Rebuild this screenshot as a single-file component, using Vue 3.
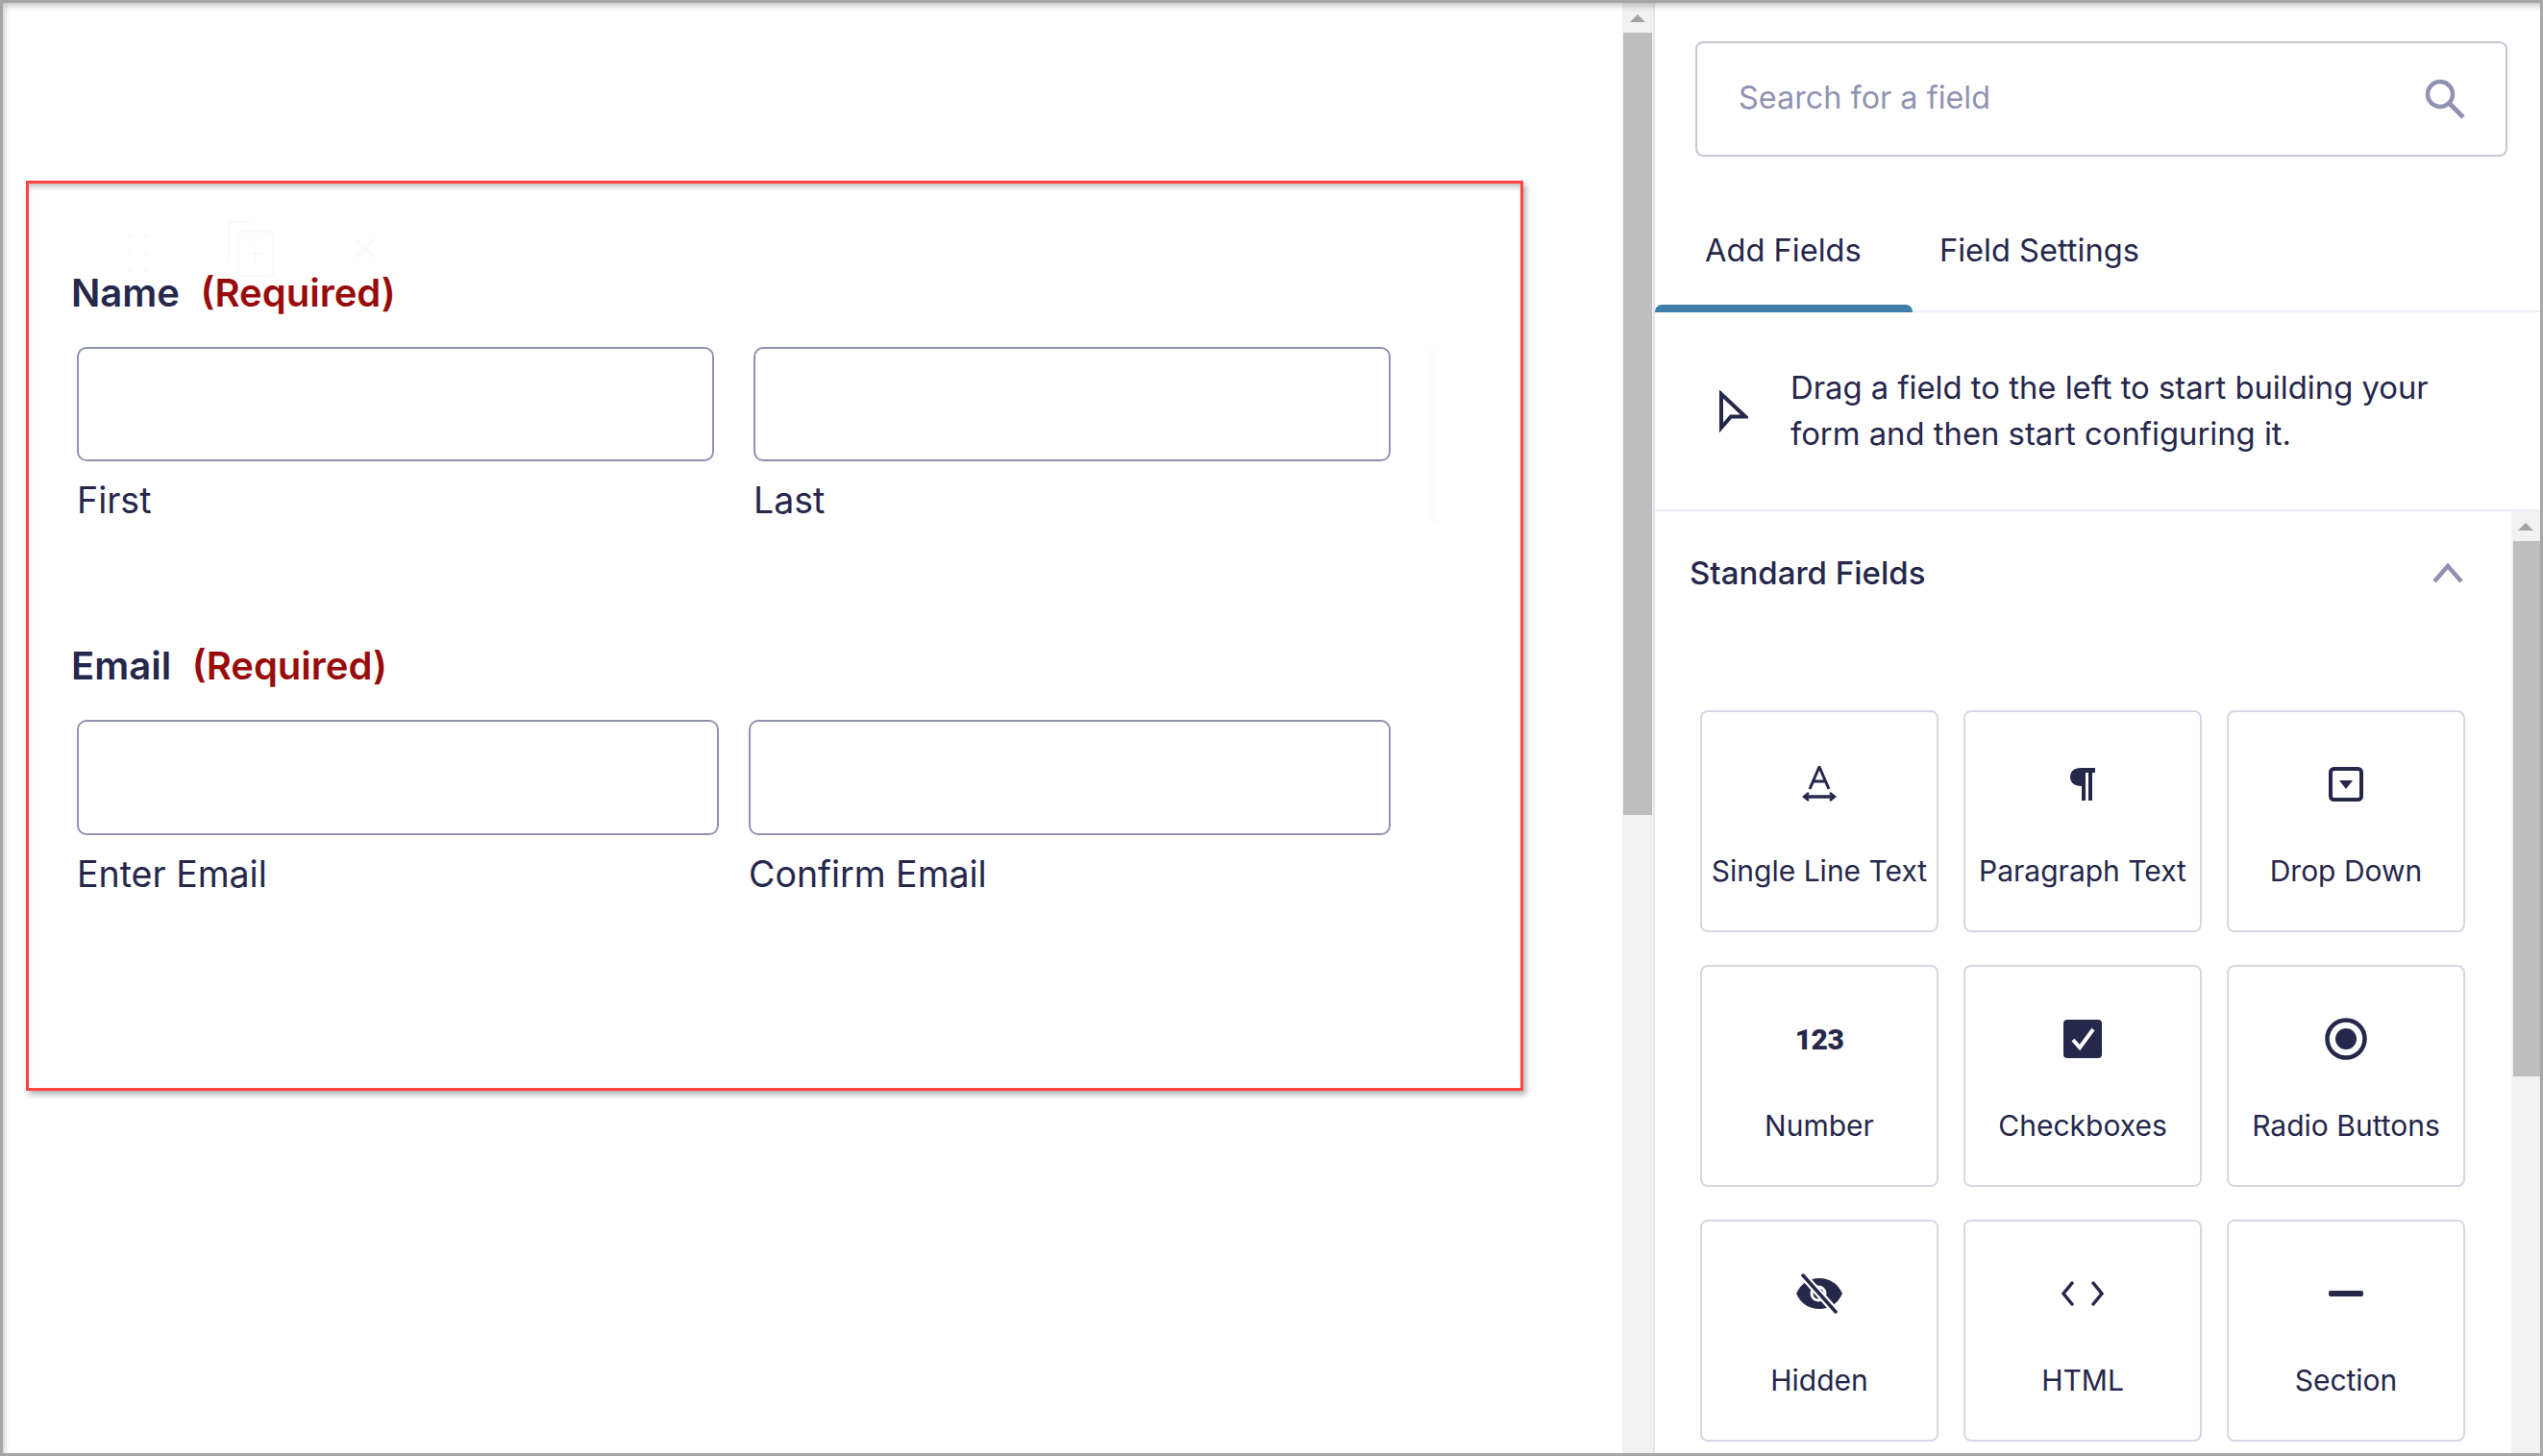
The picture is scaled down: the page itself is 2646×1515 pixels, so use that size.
<script setup>
const fieldCards = [
  { key: 'text', label: 'Single Line Text' },
  { key: 'para', label: 'Paragraph Text' },
  { key: 'drop', label: 'Drop Down' },
  { key: 'num', label: 'Number' },
  { key: 'check', label: 'Checkboxes' },
  { key: 'radio', label: 'Radio Buttons' },
  { key: 'hidden', label: 'Hidden' },
  { key: 'html', label: 'HTML' },
  { key: 'section', label: 'Section' },
]
</script>

<template>
  <div class="frame">
    <main class="canvas">
      <section class="form-box">
        <div class="ghost-tools" aria-hidden="true">
          <svg width="170" height="60" viewBox="0 0 170 60">
            <g fill="#fbfbfc">
              <circle cx="3" cy="16" r="3" /><circle cx="20" cy="16" r="3" />
              <circle cx="3" cy="34" r="3" /><circle cx="20" cy="34" r="3" />
              <circle cx="3" cy="52" r="3" /><circle cx="20" cy="52" r="3" />
            </g>
            <g fill="none" stroke="#fafafb" stroke-width="2">
              <path d="M106 2H130M106 2V44" />
              <rect x="116" y="12" width="36" height="46" rx="3" />
              <path d="M134 26V44M125 35H143" />
            </g>
          </svg>
          <span class="ghost-x">×</span>
        </div>
        <div class="ghost-bar" aria-hidden="true"></div>

        <h2 class="field-title">Name <em>(Required)</em></h2>
        <div class="input-row name-row">
          <div><div class="input"></div><div class="sub first-sub">First</div></div>
          <div><div class="input"></div><div class="sub first-sub">Last</div></div>
        </div>

        <h2 class="field-title email-title">Email <em>(Required)</em></h2>
        <div class="input-row email-row">
          <div><div class="input tall"></div><div class="sub">Enter Email</div></div>
          <div><div class="input tall"></div><div class="sub">Confirm Email</div></div>
        </div>
      </section>
    </main>

    <div class="scroll main-scroll">
      <div class="scroll-btn"><i></i></div>
      <div class="thumb main-thumb"></div>
    </div>

    <aside class="panel">
      <div class="search-wrap">
        <div class="search">
          <span>Search for a field</span>
          <svg width="44" height="44" viewBox="0 0 44 44" fill="none" stroke="#9092b2" stroke-width="4.5">
            <circle cx="17" cy="17" r="13" />
            <path d="M26.5 26.5L41 41" stroke-width="5" />
          </svg>
        </div>
      </div>

      <nav class="tabs">
        <div class="tab active">Add Fields</div>
        <div class="tab">Field Settings</div>
      </nav>

      <div class="hint">
        <svg class="cursor" width="30" height="44" viewBox="0 0 30 44" fill="none" stroke="#25274b" stroke-width="4">
          <path d="M2 4V39L12 27.5H27Z" />
        </svg>
        <p>Drag a field to the left to start building your form and then start configuring it.</p>
      </div>

      <div class="lower">
        <div class="fields">
          <div class="fields-head">
            <span>Standard Fields</span>
            <svg width="32" height="24" viewBox="0 0 32 24" fill="none" stroke="#9092b2" stroke-width="4.5">
              <path d="M2 21L16 5L30 21" />
            </svg>
          </div>
          <div class="grid">
            <div v-for="card in fieldCards" :key="card.key" class="card">
              <div class="card-icon">
                <svg v-if="card.key === 'text'" width="36" height="38" viewBox="0 0 36 38" fill="none" stroke="#25274b" stroke-width="3">
                  <path d="M8 24L18 1L28 24M11.500 16H24.500" />
                  <path d="M3 32H33" stroke-width="3.5" />
                  <path d="M7 28L2 32L7 36M29 28L34 32L29 36" stroke-width="2.5" />
                </svg>
                <svg v-else-if="card.key === 'para'" width="28" height="34" viewBox="0 0 28 34" fill="#25274b">
                  <path d="M12 0H27V5H24V34H20V5H17V34H13V19C5 19 1 15 1 9.500C1 4 5 0 12 0Z" />
                </svg>
                <svg v-else-if="card.key === 'drop'" width="36" height="36" viewBox="0 0 36 36" fill="none">
                  <rect x="2" y="2" width="32" height="32" rx="3.500" stroke="#25274b" stroke-width="4" />
                  <path d="M11 14H25L18 23Z" fill="#25274b" />
                </svg>
                <span v-else-if="card.key === 'num'" class="num-glyph">123</span>
                <svg v-else-if="card.key === 'check'" width="40" height="40" viewBox="0 0 40 40" fill="none">
                  <rect width="40" height="40" rx="4" fill="#25274b" />
                  <path d="M10 21L17 29L31 10" stroke="#fff" stroke-width="4" />
                </svg>
                <svg v-else-if="card.key === 'radio'" width="44" height="44" viewBox="0 0 44 44" fill="none">
                  <circle cx="22" cy="22" r="19.500" stroke="#25274b" stroke-width="4.500" />
                  <circle cx="22" cy="22" r="11" fill="#25274b" />
                </svg>
                <svg v-else-if="card.key === 'hidden'" width="50" height="42" viewBox="0 0 50 42">
                  <path d="M1 21C6 10 15 5 25 5C35 5 44 10 49 21C44 32 35 37 25 37C15 37 6 32 1 21Z" fill="#25274b" />
                  <circle cx="24" cy="21" r="7" fill="none" stroke="#fff" stroke-width="3" />
                  <path d="M8 2L42 40" stroke="#fff" stroke-width="8" />
                  <path d="M8 2L42 40" stroke="#25274b" stroke-width="3.500" stroke-linecap="round" />
                </svg>
                <svg v-else-if="card.key === 'html'" width="44" height="26" viewBox="0 0 44 26" fill="none" stroke="#25274b" stroke-width="3.500" stroke-linecap="round">
                  <path d="M11 2L2 13L11 24M33 2L42 13L33 24" />
                </svg>
                <svg v-else width="36" height="6" viewBox="0 0 36 6">
                  <rect width="36" height="6" rx="2" fill="#25274b" />
                </svg>
              </div>
              <div class="card-label">{{ card.label }}</div>
            </div>
          </div>
        </div>
        <div class="scroll inner-scroll">
          <div class="scroll-btn"><i></i></div>
          <div class="thumb inner-thumb"></div>
        </div>
      </div>
    </aside>
  </div>
</template>

<style>
html, body { margin: 0; background: #fff; }
</style>

<style scoped>
.frame {
  position: relative;
  box-sizing: border-box;
  width: 2646px;
  height: 1515px;
  display: flex;
  overflow: hidden;
  background: #fff;
  border: 3px solid #a6a6a6;
  color: #25274b;
  font-family: Inter, "Noto Sans", sans-serif;
}
.frame::after {
  content: "";
  position: absolute;
  inset: 0;
  box-shadow: inset 4px 6px 7px -3px rgba(0, 0, 0, 0.25);
  pointer-events: none;
}
.canvas {
  width: 1685px;
  flex: none;
  padding: 185px 0 0 24px;
  box-sizing: border-box;
}
.form-box {
  position: relative;
  box-sizing: border-box;
  width: 1558px;
  height: 947px;
  padding: 90px 0 0 44px;
  border: 3px solid #ff4444;
  box-shadow: 3px 4px 6px rgba(0, 0, 0, 0.3), inset 1px 6px 6px -3px rgba(0, 0, 0, 0.28);
}
.ghost-tools {
  position: absolute;
  top: 38px;
  left: 102px;
  display: flex;
}
.ghost-x {
  margin: 4px 0 0 63px;
  font-size: 44px;
  line-height: 44px;
  color: #fafafb;
}
.ghost-bar {
  position: absolute;
  top: 169px;
  left: 1457px;
  width: 9px;
  height: 185px;
  background: #fdfdfd;
  border-radius: 4px;
}
.field-title {
  margin: 0;
  font-size: 40px;
  line-height: 48px;
  font-weight: 600;
  word-spacing: 11.500px;
}
.field-title em {
  font-style: normal;
  color: #990c0c;
}
.email-title { margin-top: 124px; }
.input-row {
  display: grid;
  width: 1367px;
  margin: 32px 0 0 6px;
}
.name-row {
  grid-template-columns: 663px 663px;
  column-gap: 41px;
}
.email-row {
  grid-template-columns: 668px 668px;
  column-gap: 31px;
  margin-top: 32px;
}
.input {
  box-sizing: border-box;
  height: 119px;
  border: 2.500px solid #9092b2;
  border-radius: 10px;
  background: #fff;
}
.input.tall { height: 120px; }
.sub {
  margin-top: 17px;
  font-size: 37.500px;
  line-height: 48px;
}
.first-sub { margin-top: 17px; }

.scroll {
  flex: none;
  display: flex;
  flex-direction: column;
  background: #f1f1f1;
}
.main-scroll {
  width: 32px;
  border-right: 2px solid #e6e6f2;
}
.scroll-btn {
  height: 31px;
  display: flex;
  align-items: center;
  justify-content: center;
}
.scroll-btn i {
  width: 0;
  height: 0;
  border-left: 8px solid transparent;
  border-right: 8px solid transparent;
  border-bottom: 8px solid #a3a3a3;
}
.thumb {
  background: #bebebe;
  margin: 0 1px;
}
.main-thumb { height: 814px; }

.panel {
  flex: 1;
  min-width: 0;
  display: flex;
  flex-direction: column;
}
.search-wrap { padding: 40px 0 0 42px; }
.search {
  box-sizing: border-box;
  width: 845px;
  height: 120px;
  padding: 0 41px 0 43px;
  display: flex;
  align-items: center;
  justify-content: space-between;
  border: 2.500px solid #c5c7db;
  border-radius: 8px;
  color: #9092b2;
  font-size: 32.400px;
}
.search span { margin-top: -3px; }
.tabs {
  box-sizing: border-box;
  height: 162px;
  display: flex;
  border-bottom: 2px solid #ecedf8;
}
.tab {
  position: relative;
  box-sizing: border-box;
  height: 160px;
  padding: 73px 0 0 28px;
  font-size: 32.600px;
  line-height: 48px;
}
.tab.active {
  width: 268px;
  padding-left: 52px;
}
.tab.active::after {
  content: "";
  position: absolute;
  left: 0;
  right: 0;
  bottom: -2px;
  height: 8px;
  background: #3e7da6;
  border-radius: 7px 7px 0 0;
}
.hint {
  box-sizing: border-box;
  height: 207px;
  padding: 0 40px 0 67px;
  display: flex;
  align-items: center;
  gap: 44px;
  border-bottom: 2px solid #ecedf8;
}
.hint p {
  margin: -2px 0 0;
  font-size: 32.800px;
  line-height: 48px;
  width: 700px;
}
.cursor { flex: none; }
.lower {
  flex: 1;
  min-height: 0;
  display: flex;
}
.fields {
  flex: 1;
  min-width: 0;
}
.fields-head {
  height: 128px;
  padding: 0 50px 0 36px;
  box-sizing: border-box;
  display: flex;
  align-items: center;
  justify-content: space-between;
  font-size: 33px;
  font-weight: 500;
}
.grid {
  display: grid;
  grid-template-columns: repeat(3, 248px);
  grid-auto-rows: 231px;
  column-gap: 26px;
  row-gap: 34px;
  margin: 79px 0 0 47px;
}
.card {
  box-sizing: border-box;
  border: 2.500px solid #d5d7e8;
  border-radius: 8px;
  display: flex;
  flex-direction: column;
  align-items: center;
}
.card-icon {
  height: 48px;
  margin-top: 51px;
  display: flex;
  align-items: center;
  justify-content: center;
}
.num-glyph {
  font-family: Roboto, sans-serif;
  font-size: 30px;
  font-weight: 900;
  letter-spacing: -0.500px;
}
.card-label {
  margin-top: 42px;
  font-size: 30px;
  line-height: 48px;
  white-space: nowrap;
}
.inner-scroll { width: 30px; }
.inner-thumb { height: 557px; margin-left: 2px; margin-right: 0; }
</style>
